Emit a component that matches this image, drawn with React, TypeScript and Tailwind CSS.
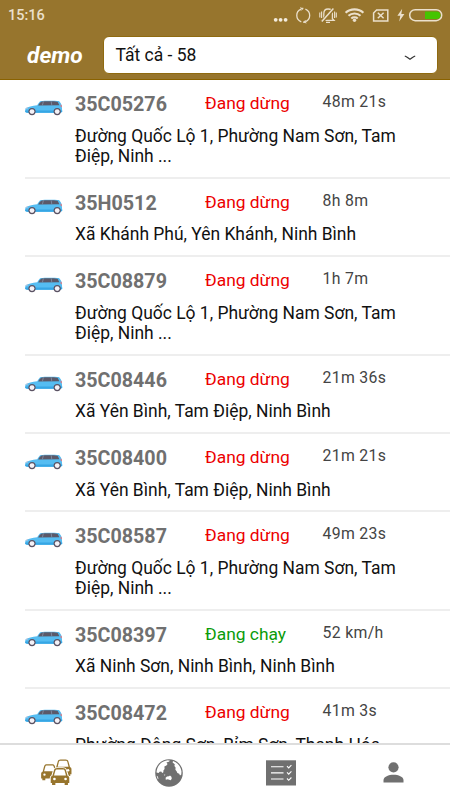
import React, { FC } from "react";

interface IVehicle {
  plate: string;
  status: string;
  running?: boolean;
  info: string;
  address: string[];
}

const vehicles: IVehicle[] = [
  {
    plate: "35C05276",
    status: "Đang dừng",
    info: "48m 21s",
    address: ["Đường Quốc Lộ 1, Phường Nam Sơn, Tam", "Điệp, Ninh ..."],
  },
  {
    plate: "35H0512",
    status: "Đang dừng",
    info: "8h 8m",
    address: ["Xã Khánh Phú, Yên Khánh, Ninh Bình"],
  },
  {
    plate: "35C08879",
    status: "Đang dừng",
    info: "1h 7m",
    address: ["Đường Quốc Lộ 1, Phường Nam Sơn, Tam", "Điệp, Ninh ..."],
  },
  {
    plate: "35C08446",
    status: "Đang dừng",
    info: "21m 36s",
    address: ["Xã Yên Bình, Tam Điệp, Ninh Bình"],
  },
  {
    plate: "35C08400",
    status: "Đang dừng",
    info: "21m 21s",
    address: ["Xã Yên Bình, Tam Điệp, Ninh Bình"],
  },
  {
    plate: "35C08587",
    status: "Đang dừng",
    info: "49m 23s",
    address: ["Đường Quốc Lộ 1, Phường Nam Sơn, Tam", "Điệp, Ninh ..."],
  },
  {
    plate: "35C08397",
    status: "Đang chạy",
    running: true,
    info: "52 km/h",
    address: ["Xã Ninh Sơn, Ninh Bình, Ninh Bình"],
  },
  {
    plate: "35C08472",
    status: "Đang dừng",
    info: "41m 3s",
    address: ["Phường Đông Sơn, Bỉm Sơn, Thanh Hóa"],
  },
];

const CarIcon: FC = () => (
  <svg className="block" width="38" height="16" viewBox="0 0 38 16">
    <path
      d="M0.4 8.6 C3 6.6 7 6 12.2 5.3 C13.6 3 14.6 1.4 15.8 1 C20 0.6 30 0.6 34 1.1 C35.4 2.6 36.4 4.2 36.8 5.8 L37.2 11.8 L35.6 12.8 L2 12.8 L0.2 12 Z"
      fill="#55bdf2"
    />
    <path d="M0.2 10.6 H37.2 V11.8 L35.6 12.8 H2 L0.2 12 Z" fill="#36a6e4" />
    <path
      d="M13.2 5.4 C14.5 3.2 15.6 2 16.8 1.6 C22 1.2 28 1.2 32.6 1.7 L34.4 5.2 Z"
      fill="#5b5969"
    />
    <path d="M18.4 1.4 L17.4 5.4 M26.2 1.4 L26.8 5.4" stroke="#8296ad" strokeWidth="0.8" />
    <path d="M1.2 7.8 L3.4 7 L2.8 8.6 L0.6 9 Z" fill="#b9c5dd" />
    <path d="M35.4 4.6 L36.6 5 L37 7.2 L35.8 7 Z" fill="#e8737b" />
    <circle cx="7" cy="11.6" r="3.6" fill="#5a5263" />
    <circle cx="7" cy="11.6" r="2.4" fill="#f4f2f7" />
    <circle cx="32.2" cy="11.6" r="3.6" fill="#5a5263" />
    <circle cx="32.2" cy="11.6" r="2.4" fill="#f4f2f7" />
  </svg>
);

const StatusIcons: FC = () => (
  <svg
    className="block"
    width="170"
    height="32"
    viewBox="273 0 170 32"
    fill="none"
    stroke="#ebe0cc"
    strokeWidth="1.3"
  >
    <g fill="#f3ebdc" stroke="none">
      <circle cx="275.7" cy="19.8" r="1.9" />
      <circle cx="280.6" cy="19.8" r="1.9" />
      <circle cx="285.6" cy="19.8" r="1.9" />
    </g>
    <path d="M301.3 21.8 A6.8 6.8 0 0 1 301 9.1 M305.4 9.1 A6.8 6.8 0 0 1 305.2 21.8" />
    <path d="M301.2 8.6 A6.8 6.8 0 0 1 303.3 8.5 M303.2 22.3 L305.3 21.9" />
    <path d="M300.2 7.7 L302.8 8.8 L301 10.6 M306.4 23 L303.8 22 L305.5 20.2" strokeWidth="1" />
    <path d="M323.8 18.8 V13.8 C323.8 7.4 332.4 7.4 332.4 13.8 V18.8 L334 20.4 H322.2 Z M326 22.3 H330" />
    <path d="M322.2 21.6 L333.8 8.6" stroke="#97752d" strokeWidth="3.6" />
    <path d="M321.8 21.4 L333.4 8.6" strokeWidth="1.5" />
    <path d="M319.8 12.5 V17.4 M321.6 11.4 V18 M334.6 11.4 V18 M336.3 12.5 V17.4" strokeWidth="1.1" />
    <g strokeWidth="2.1">
      <path d="M345.6 12.8 C350.4 8.2 358.6 8.2 363.4 12.8" />
      <path d="M348.5 15.8 C351.7 12.8 357.3 12.8 360.5 15.8" />
      <path d="M351.3 18.5 C353 16.9 356 16.9 357.7 18.5" />
    </g>
    <circle cx="354.5" cy="20.2" r="1.7" fill="#ebe0cc" stroke="none" />
    <path d="M376.6 9.9 H387.8 V21 H373.6 V13 Z" strokeWidth="1.5" />
    <path d="M377.8 12.8 L383.6 18.2 M383.6 12.8 L377.8 18.2" strokeWidth="1.5" />
    <path d="M402.2 8.8 L397.4 15.8 H400.3 L399.2 21.4 L404.4 13.9 H401.3 Z" fill="#ebe0cc" stroke="none" />
    <rect x="409.7" y="9.7" width="32" height="11" rx="5.5" strokeWidth="1.5" />
    <path d="M425 11.4 H436.6 A3.8 3.8 0 0 1 436.6 19 H425 Z" fill="#46c400" stroke="none" />
  </svg>
);

const FleetIcon: FC = () => (
  <svg className="block" width="31" height="27" viewBox="0 0 31 27">
    <defs>
      <g id="fleet-car">
        <path
          d="M2.6 9 L4.1 3.2 C4.6 1.2 5.5 0.5 7.3 0.5 H12.7 C14.5 0.5 15.4 1.2 15.9 3.2 L17.4 9 C18.5 9.5 19 10.2 19 11.4 V17 H17.7 V19 H14.5 V17 H5.5 V19 H2.3 V17 H1 V11.4 C1 10.2 1.5 9.5 2.6 9 Z"
          fill="#97752d"
          stroke="#fff"
          strokeWidth="2"
          paintOrder="stroke"
        />
        <path
          d="M4.2 8.6 L5.4 3.6 C5.7 2.4 6.2 2 7.3 2 H12.7 C13.8 2 14.3 2.4 14.6 3.6 L15.8 8.6 Z"
          fill="#fff"
        />
        <circle cx="4.6" cy="12.5" r="1.3" fill="#fff" />
        <circle cx="15.4" cy="12.5" r="1.3" fill="#fff" />
      </g>
    </defs>
    <use href="#fleet-car" transform="translate(12.8 0) scale(0.93 0.9)" />
    <use href="#fleet-car" transform="translate(-0.8 4.8) scale(0.93 0.87)" />
    <use href="#fleet-car" transform="translate(8.7 8.6) scale(1.03 0.91)" />
  </svg>
);

const GlobeIcon: FC = () => (
  <svg className="block" width="28" height="28" viewBox="0 0 28 28">
    <circle cx="14" cy="14" r="13.8" fill="#707070" />
    <g fill="#fff">
      <path d="M4.6 5.4 C6.8 3 9.6 1.6 12.8 1.3 L15 1.8 L13.8 2.8 L11.4 3.4 L12.6 5 L11.4 6.6 L9.4 7.6 L9.6 10 L8.4 11.4 L8.4 13.2 L7.2 14 L6.2 12.6 L4.6 12.8 L3.6 14 L1.5 13.6 C1.6 10.4 2.7 7.6 4.6 5.4 Z" />
      <path d="M18 2 C22.8 3.6 26 7.8 26.5 12.6 L26.3 15.6 L25 16.4 L24.2 14.8 L22.4 14 L21.6 12.2 L20.4 10.8 L20.6 8.6 L19.4 7 L19.8 5.2 L17.6 3.4 Z" />
      <path d="M10.6 18.8 L12 17.4 L14 17.2 L15 16.4 L16.4 17.8 L16.8 19.6 L15.8 21.2 L14.2 20.8 L12.8 20.2 L10.8 20.8 Z" />
      <path d="M8.8 15.4 L10.4 15.8 L9.8 16.8 Z M1.6 16.8 L2.8 17.6 L3.4 19.2 L3 20.4 Z" />
    </g>
  </svg>
);

const ChecklistIcon: FC = () => (
  <svg className="block" width="30" height="26" viewBox="0 0 30 26">
    <rect y="0.3" width="30" height="25.2" fill="#707070" />
    <g fill="none" stroke="#fff" strokeWidth="1.1">
      <path d="M5 6.7 H17.5 M5 12.9 H17.5 M5 19 H17.5" />
      <path d="M21 6.2 L22.7 8 L25.4 5.2 M21 12.4 L22.7 14.2 L25.4 11.4 M21 18.5 L22.7 20.3 L25.4 17.5" />
    </g>
  </svg>
);

const UserIcon: FC = () => (
  <svg className="block" width="21" height="21" viewBox="0 0 21 21">
    <circle cx="10.5" cy="5.3" r="5.1" fill="#707070" />
    <path d="M0.5 20.5 V18 C0.5 14.7 5.7 12.7 10.5 12.7 C15.3 12.7 20.5 14.7 20.5 18 V20.5 Z" fill="#707070" />
  </svg>
);

const VehicleRow: FC<{ vehicle: IVehicle }> = ({ vehicle }) => (
  <li className="ml-[25px] flex shrink-0 border-b-2 border-[#eeeeee] pt-[13px] pb-[9.7px]">
    <div className="w-[50px] shrink-0 pt-[7px]">
      <CarIcon />
    </div>
    <div className="flex-1">
      <div className="flex h-[32.6px] whitespace-nowrap">
        <span className="w-[130px] text-[19.7px] leading-[23px] font-bold text-[#707070]">
          {vehicle.plate}
        </span>
        <span
          className={`w-[117.6px] text-[17.4px] leading-[20px] ${
            vehicle.running ? "text-[#0a9b0a]" : "text-[#ec0000]"
          }`}
        >
          {vehicle.status}
        </span>
        <span className="text-[15.8px] leading-[18.8px] tracking-[0.3px] text-[#444444]">
          {vehicle.info}
        </span>
      </div>
      <p className="text-[17.46px] leading-[20.8px] whitespace-nowrap text-[#111111]">
        {vehicle.address.map((line) => (
          <span key={line} className="block">
            {line}
          </span>
        ))}
      </p>
    </div>
  </li>
);

const App: FC = () => {
  return (
    <div className="flex h-[800px] w-[450px] flex-col overflow-hidden bg-white font-['Roboto',sans-serif]">
      <header className="h-[80px] shrink-0 border-b border-[#8a6200] bg-[#97752d]">
        <div className="flex h-[32px] items-center justify-between pr-[7px] pl-[8px]">
          <span className="text-[14.5px] font-medium text-[#ebe0cc]">15:16</span>
          <StatusIcons />
        </div>
        <div className="flex pt-[4px] pl-[27px]">
          <h1 className="w-[76px] text-[22.7px] leading-[40px] font-bold text-white italic">
            demo
          </h1>
          <div className="flex h-[38px] w-[335px] items-center justify-between rounded-[6px] border border-[#8f6a10] bg-white pt-[1px] pr-[21px] pl-[11.5px]">
            <span className="text-[17.5px] text-[#111111]">Tất cả - 58</span>
            <svg className="mt-[4px]" width="12" height="6" viewBox="0 0 12 6" fill="none">
              <path d="M0.8 1 C3 1.7 4.5 3.5 6 4.3 C7.5 3.5 9 1.7 11.2 1" stroke="#333" strokeWidth="1.2" />
            </svg>
          </div>
        </div>
      </header>
      <ul className="flex min-h-0 flex-1 flex-col overflow-hidden">
        {vehicles.map((vehicle) => (
          <VehicleRow key={vehicle.plate} vehicle={vehicle} />
        ))}
      </ul>
      <nav className="grid h-[57px] shrink-0 grid-cols-4 place-items-center border-t-2 border-[#dddddd] bg-white">
        <FleetIcon />
        <GlobeIcon />
        <ChecklistIcon />
        <UserIcon />
      </nav>
    </div>
  );
};

export default App;
